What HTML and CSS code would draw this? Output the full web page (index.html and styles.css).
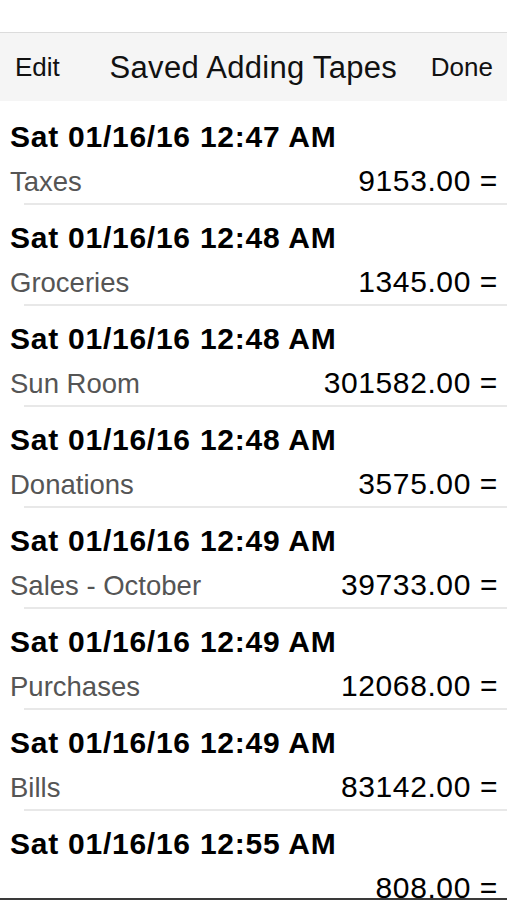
FILE: index.html
```html
<!DOCTYPE html>
<html>
<head>
<meta charset="utf-8">
<link rel="stylesheet" href="styles.css">
</head>
<body>
<div class="screen">
  <div class="status"></div>
  <header class="nav">
    <span class="nav-btn">Edit</span>
    <span class="nav-title">Saved Adding Tapes</span>
    <span class="nav-btn">Done</span>
  </header>
  <ul class="list">
    <li class="row"><div class="date">Sat 01/16/16 12:47 AM</div><div class="line"><span class="label">Taxes</span><span class="amount">9153.00 =</span></div></li>
    <li class="row"><div class="date">Sat 01/16/16 12:48 AM</div><div class="line"><span class="label">Groceries</span><span class="amount">1345.00 =</span></div></li>
    <li class="row"><div class="date">Sat 01/16/16 12:48 AM</div><div class="line"><span class="label">Sun Room</span><span class="amount">301582.00 =</span></div></li>
    <li class="row"><div class="date">Sat 01/16/16 12:48 AM</div><div class="line"><span class="label">Donations</span><span class="amount">3575.00 =</span></div></li>
    <li class="row"><div class="date">Sat 01/16/16 12:49 AM</div><div class="line"><span class="label">Sales - October</span><span class="amount">39733.00 =</span></div></li>
    <li class="row"><div class="date">Sat 01/16/16 12:49 AM</div><div class="line"><span class="label">Purchases</span><span class="amount">12068.00 =</span></div></li>
    <li class="row"><div class="date">Sat 01/16/16 12:49 AM</div><div class="line"><span class="label">Bills</span><span class="amount">83142.00 =</span></div></li>
    <li class="row"><div class="date">Sat 01/16/16 12:55 AM</div><div class="line"><span class="label"></span><span class="amount">808.00 =</span></div></li>
  </ul>
  <div class="bottom-bar"></div>
</div>
</body>
</html>
```
FILE: styles.css
```css
html, body {
  margin: 0;
  padding: 0;
  background: #ffffff;
}
.screen {
  width: 507px;
  height: 900px;
  display: flex;
  flex-direction: column;
  overflow: hidden;
  font-family: "Liberation Sans", Arial, sans-serif;
  color: #000;
}
.status {
  height: 32px;
  flex: none;
  background: #ffffff;
}
.nav {
  flex: none;
  height: 68px;
  border-top: 1px solid #dcdcdc;
  background: #f5f5f5;
  display: flex;
  align-items: center;
  justify-content: space-between;
  padding: 0 14px 0 15px;
}
.nav-btn {
  font-size: 26px;
  color: #111;
}
.nav-title {
  font-size: 31px;
  letter-spacing: 0.3px;
  color: #111;
  margin-left: 16px;
  margin-top: 2px;
}
.list {
  flex: 1;
  list-style: none;
  margin: 0;
  padding: 3px 0 0 0;
  overflow: hidden;
}
.row {
  height: 101px;
  box-sizing: border-box;
  padding: 11px 10px 0 10px;
  position: relative;
  display: flex;
  flex-direction: column;
}
.row::after {
  content: "";
  position: absolute;
  left: 24px;
  right: 0;
  bottom: 0;
  height: 2px;
  background: #e8e8e8;
}
.date {
  font-size: 30px;
  font-weight: bold;
  letter-spacing: 0.75px;
  line-height: 44px;
  color: #000;
}
.line {
  display: flex;
  justify-content: space-between;
  align-items: baseline;
  line-height: 36px;
  margin-top: 4px;
}
.label {
  font-size: 27.5px;
  color: #555;
}
.amount {
  font-size: 30px;
  letter-spacing: 0.6px;
  margin-right: -1px;
  color: #000;
}
.bottom-bar {
  flex: none;
  height: 2px;
  background: #3a3a3a;
}
```
